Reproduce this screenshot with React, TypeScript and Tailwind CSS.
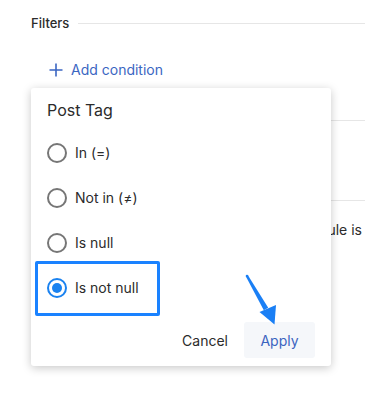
function Radio({ label, checked }: { label: string; checked?: boolean }) {
  return (
    <div className="flex h-[45px] items-center gap-[8px] pl-[16px]">
      <span
        className={
          checked
            ? 'flex h-[20px] w-[20px] items-center justify-center rounded-full border-2 border-[#1a82f0]'
            : 'flex h-[20px] w-[20px] items-center justify-center rounded-full border-2 border-[#767676]'
        }
      >
        {checked && <span className="h-[10px] w-[10px] rounded-full bg-[#1a82f0]" />}
      </span>
      <span className="text-[14px] leading-[20px] text-[#2b2b2b]">{label}</span>
    </div>
  );
}

export default function App() {
  return (
    <div
      className="relative h-[397px] w-[365px] overflow-hidden bg-white"
      style={{ fontFamily: 'Inter, "Noto Sans", sans-serif' }}
    >
      {/* Page behind the popover */}
      <div className="pl-[31px] pt-[13px]">
        <div className="flex items-center">
          <span className="text-[13px] font-medium leading-[20px] text-[#2b2b2b]">Filters</span>
          <div className="ml-[9px] h-px flex-1 bg-[#e6e6e6]" />
        </div>

        <button className="ml-[18px] mt-[27px] flex h-[20px] items-center gap-[8px] text-[#3b66c2]">
          <svg width="14" height="14" viewBox="0 0 14 14" fill="none" stroke="currentColor" strokeWidth="1.6">
            <path d="M7 0.5v13M0.5 7h13" />
          </svg>
          <span className="text-[14px] leading-[20px]">Add condition</span>
        </button>

        <div className="mt-[40px] h-px bg-[#e6e6e6]" />
        <div className="mt-[79px] h-px bg-[#e6e6e6]" />
        <div className="mt-[19px] flex justify-end pr-[3px]">
          <span className="text-[14px] leading-[20px] text-[#2b2b2b]">This rule is</span>
        </div>
      </div>

      {/* Popover */}
      <div className="absolute left-[31px] top-[88px] w-[300px] rounded-[3px] bg-white pb-[8px] pt-[12px] shadow-[0_2px_10px_rgba(0,0,0,0.22)]">
        <div className="pl-[16px] text-[16px] leading-[20px] text-[#2b2b2b]">Post Tag</div>
        <div className="mt-[10px]">
          <Radio label="In (=)" />
          <Radio label="Not in (≠)" />
          <Radio label="Is null" />
          <Radio label="Is not null" checked />
        </div>
        <div className="mt-[12px] flex justify-end pr-[16px]">
          <button className="h-[36px] px-[16px] text-[14px] text-[#2b2b2b]">Cancel</button>
          <button className="h-[36px] w-[71px] rounded-[3px] bg-[#f5f7fa] text-[14px] text-[#3b64c0]">Apply</button>
        </div>

        <div className="absolute left-[4px] top-[173px] h-[55px] w-[125px] rounded-[2px] border-[3px] border-[#1a82ff]" />
      </div>

      {/* Annotation arrow */}
      <svg className="absolute left-0 top-0" width="365" height="397" viewBox="0 0 365 397">
        <circle cx="247" cy="276" r="1.3" fill="#1a7ff5" />
        <polygon points="248.1,275.4 268.2,307.8 263.8,310.2 245.9,276.6" fill="#1a7ff5" />
        <polygon points="274.5,324.5 259.5,312 276,305" fill="#1a7ff5" />
      </svg>
    </div>
  );
}
